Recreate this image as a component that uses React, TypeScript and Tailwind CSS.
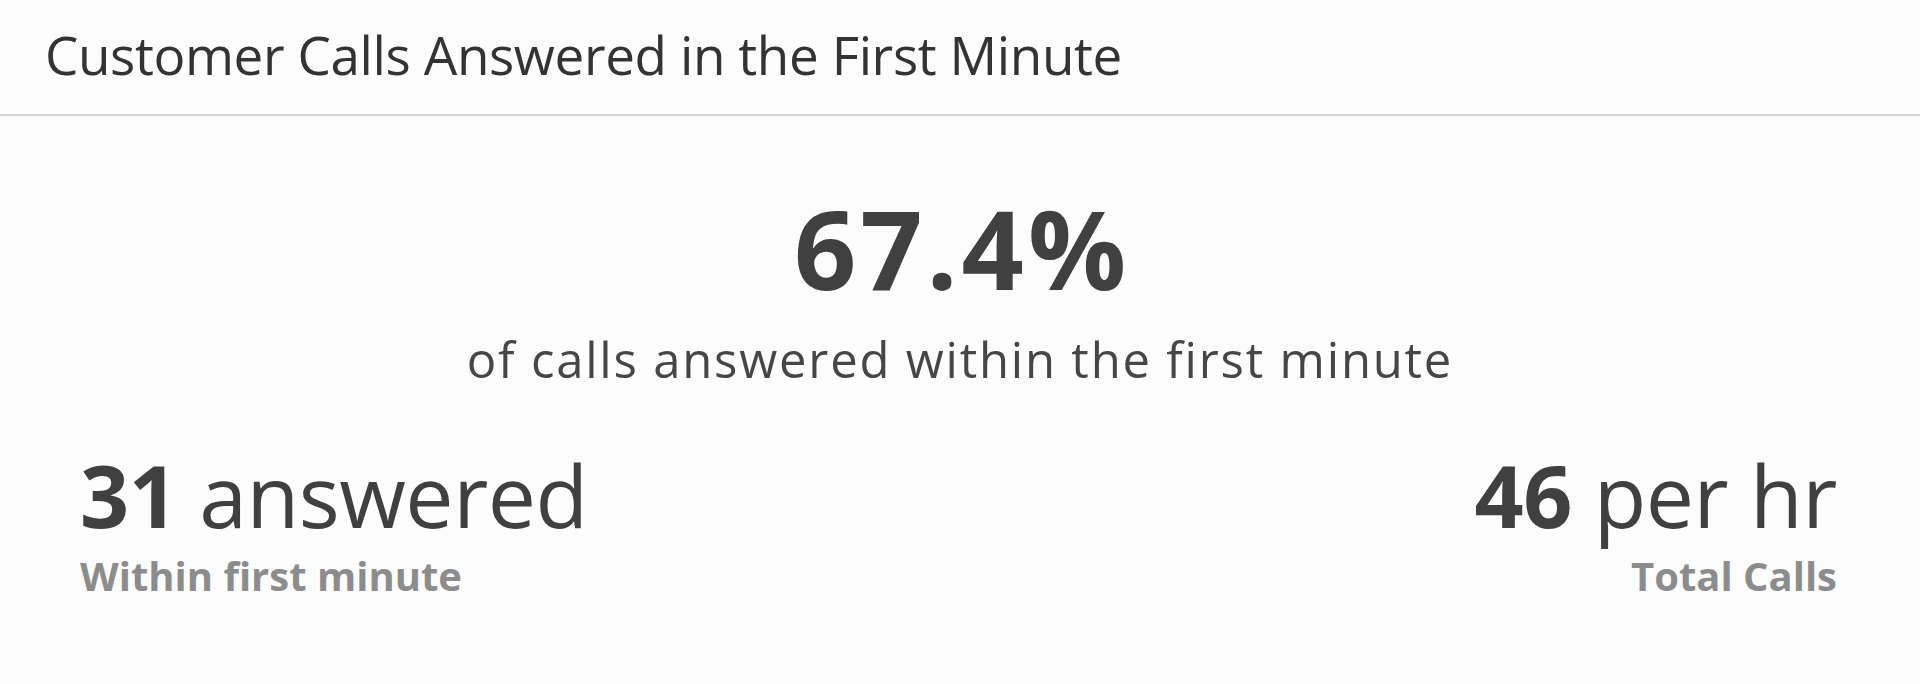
import React from "react";

const sans = { fontFamily: '"Open Sans", "DejaVu Sans", sans-serif' };

function Stat({ value, unit, label, align }: { value: string; unit: string; label: string; align: "left" | "right" }) {
  return (
    <div className={align === "right" ? "flex flex-col items-end" : "flex flex-col items-start"}>
      <div className="text-[86px] leading-none text-[#404040] whitespace-nowrap tracking-[-0.5px]">
        <span className="font-bold">{value}</span> {unit}
      </div>
      <div className="mt-[18px] text-[40px] leading-none font-bold text-[#8c8c8c] whitespace-nowrap">
        {label}
      </div>
    </div>
  );
}

export default function App() {
  return (
    <div className="w-[1920px] h-[684px] bg-[#fcfcfc] flex flex-col overflow-hidden" style={sans}>
      <div className="h-[116px] shrink-0 border-b-2 border-[#d2d2d2] pl-[45px] pt-[28px]">
        <h1 className="text-[53px] font-normal text-[#333333] leading-none tracking-[-0.4px] whitespace-nowrap">
          Customer Calls Answered in the First Minute
        </h1>
      </div>
      <div className="flex flex-col items-center pt-[77px]">
        <div className="text-[109px] leading-none font-bold text-[#404040] tracking-[4px] pl-[4px]">67.4%</div>
        <div className="mt-[33px] text-[49px] leading-none text-[#464646] tracking-[1.8px] whitespace-nowrap">
          of calls answered within the first minute
        </div>
      </div>
      <div className="flex justify-between pl-[80px] pr-[83px] mt-[68px]">
        <Stat value="31" unit="answered" label="Within first minute" align="left" />
        <Stat value="46" unit="per hr" label="Total Calls" align="right" />
      </div>
    </div>
  );
}
